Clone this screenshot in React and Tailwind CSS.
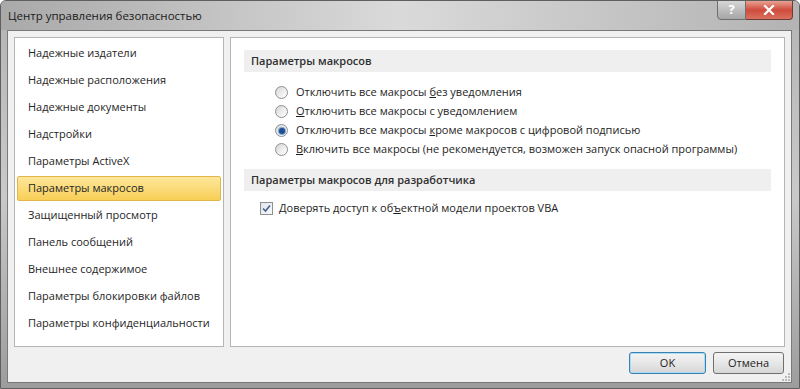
import React from 'react';

const font = { fontFamily: '"Open Sans", "Noto Sans", "Liberation Sans", sans-serif' };

const menuItems = [
  'Надежные издатели',
  'Надежные расположения',
  'Надежные документы',
  'Надстройки',
  'Параметры ActiveX',
  'Параметры макросов',
  'Защищенный просмотр',
  'Панель сообщений',
  'Внешнее содержимое',
  'Параметры блокировки файлов',
  'Параметры конфиденциальности',
];

const Radio = ({ checked }) => (
  <span className="w-[13px] h-[13px] rounded-full border border-[#8e8f8f] bg-gradient-to-br from-[#d4d4d4] via-[#ececec] to-white flex items-center justify-center shrink-0">
    {checked && (
      <span className="w-[6px] h-[6px] rounded-full bg-[#1f4f8f] ring-1 ring-[#7aa7d8]" />
    )}
  </span>
);

const Checkbox = () => (
  <span className="w-[13px] h-[13px] border border-[#8e8f8f] bg-gradient-to-br from-[#dfe6f0] to-[#f7f9fc] flex items-center justify-center shrink-0">
    <svg width="9" height="9" viewBox="0 0 9 9">
      <path d="M1 4.5 L3.5 7 L8 1.5" fill="none" stroke="#4c5f8a" strokeWidth="1.6" />
    </svg>
  </span>
);

const SectionHeader = ({ children, className = '' }) => (
  <div className={`mx-[13px] h-[22px] bg-[#efefef] flex items-center pl-[7px] text-[11px] font-semibold text-[#2f2f2f] ${className}`}>
    {children}
  </div>
);

const Option = ({ checked, children }) => (
  <div className="h-[19px] flex items-center gap-[8px] text-[11px] text-[#1e1e1e] whitespace-nowrap">
    <Radio checked={checked} />
    <span>{children}</span>
  </div>
);

export default function App() {
  return (
    <div className="w-[800px] h-[389px] flex flex-col overflow-hidden bg-gradient-to-b from-[#b4b4b4] via-[#c9c9c9] to-[#9d9d9d] rounded-t-[6px] border border-[#5f5f5f]" style={font}>
      {/* Title bar */}
      <div className="h-[29px] flex items-start justify-between bg-gradient-to-r from-[#a9a9a9] via-[#dadada] to-[#b3b3b3]">
        <div className="pl-[7px] pt-[6px] text-[11.5px] text-[#1b1b1b]">Центр управления безопасностью</div>
        <div className="flex mr-[6px] -mt-px">
          <div className="w-[29px] h-[20px] rounded-bl-[4px] border border-[#6e6e6e] bg-gradient-to-b from-[#d6d6d6] to-[#a6a6a6] flex items-center justify-center text-[13px] font-bold text-white">
            ?
          </div>
          <div className="w-[47px] h-[20px] rounded-br-[4px] border border-l-0 border-[#6e3a3a] bg-gradient-to-b from-[#e8a093] via-[#cf4b3c] to-[#d9705f] flex items-center justify-center">
            <svg width="12" height="10" viewBox="0 0 12 10">
              <path d="M2 1 L10 9 M10 1 L2 9" stroke="#ffffff" strokeWidth="2.2" strokeLinecap="square" />
            </svg>
          </div>
        </div>
      </div>

      {/* Client area */}
      <div className="relative flex-1 ml-[6px] mr-[7px] mb-[5px] bg-[#f0f0f0] border border-[#7a7a7a] flex flex-col px-[6px] pt-[6px]">
        <div className="flex gap-[6px] h-[310px]">
          {/* Left nav */}
          <div className="w-[210px] bg-white border border-[#b5b5b5] pt-[3px]">
            {menuItems.map((item) => {
              const active = item === 'Параметры макросов';
              return (
                <div
                  key={item}
                  className={`h-[25px] mb-[2px] mx-[2px] flex items-center pl-[10px] text-[11px] text-[#262626] whitespace-nowrap rounded-[2px] border ${
                    active
                      ? 'border-[#e2b649] bg-gradient-to-b from-[#fde79a] to-[#f8cf55]'
                      : 'border-transparent'
                  }`}
                >
                  {item}
                </div>
              );
            })}
          </div>

          {/* Right content */}
          <div className="flex-1 bg-white border border-[#b5b5b5] pt-[12px]">
            <SectionHeader>Параметры макросов</SectionHeader>
            <div className="pl-[44px] mt-[11px]">
              <Option>
                Отключить все макросы <u>б</u>ез уведомления
              </Option>
              <Option>
                <u>О</u>тключить все макросы с уведомлением
              </Option>
              <Option checked>
                Отключить все макросы <u>к</u>роме макросов с цифровой подписью
              </Option>
              <Option>
                <u>В</u>ключить все макросы (не рекомендуется, возможен запуск опасной программы)
              </Option>
            </div>
            <SectionHeader className="mt-[10px]">Параметры макросов для разработчика</SectionHeader>
            <div className="pl-[29px] mt-[8px] h-[19px] flex items-center gap-[6px] text-[11px] text-[#1e1e1e]">
              <Checkbox />
              <span>
                Доверять доступ к об<u>ъ</u>ектной модели проектов VBA
              </span>
            </div>
          </div>
        </div>

        {/* Buttons */}
        <div className="flex justify-end gap-[7px] mt-[5px] pr-px">
          <button className="w-[77px] h-[22px] rounded-[3px] border border-[#3c7fb1] bg-gradient-to-b from-[#f4f4f4] via-[#e7e7e7] to-[#d6d6d6] text-[11px] text-[#1e1e1e] shadow-[inset_0_0_0_1px_#a9dcf5]">
            OK
          </button>
          <button className="w-[71px] h-[22px] rounded-[3px] border border-[#707070] bg-gradient-to-b from-[#f4f4f4] via-[#e7e7e7] to-[#d6d6d6] text-[11px] text-[#1e1e1e]">
            Отмена
          </button>
        </div>

        {/* Resize grip */}
        <svg className="absolute right-[1px] bottom-[1px]" width="10" height="10" viewBox="0 0 10 10">
          <g fill="#b9b9b9">
            <rect x="8" y="2" width="2" height="2" />
            <rect x="5" y="5" width="2" height="2" />
            <rect x="8" y="5" width="2" height="2" />
            <rect x="2" y="8" width="2" height="2" />
            <rect x="5" y="8" width="2" height="2" />
            <rect x="8" y="8" width="2" height="2" />
          </g>
        </svg>
      </div>
    </div>
  );
}
